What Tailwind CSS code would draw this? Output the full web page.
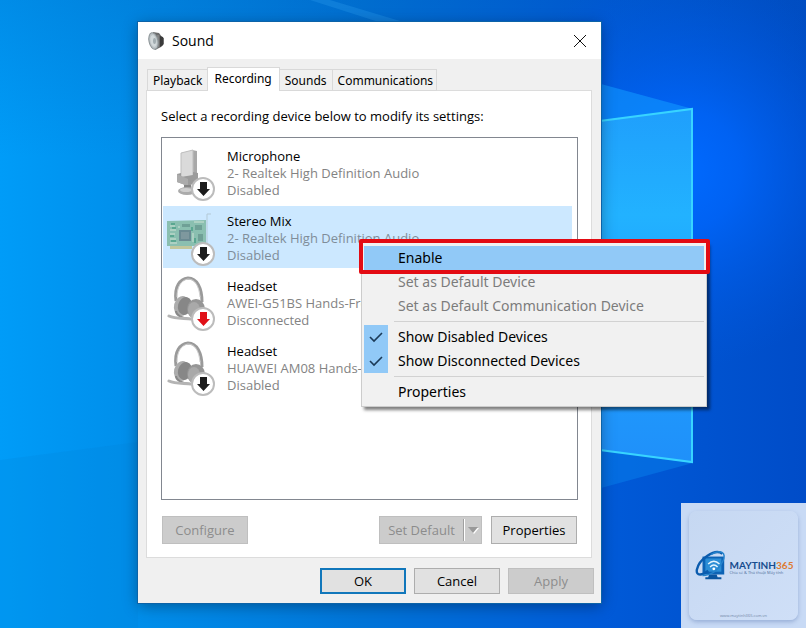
<!DOCTYPE html>
<html lang="en">
  <head>
    <meta charset="UTF-8" />
    <meta name="viewport" content="width=device-width, initial-scale=1.0" />
    <script src="https://cdn.jsdelivr.net/npm/@tailwindcss/browser@4"></script>
    <title>Sound</title>
  </head>
  <body class="relative min-h-screen overflow-hidden bg-[#0063d8] font-['Open_Sans','Noto_Sans',sans-serif] text-[13px] leading-[17px] text-black">
    <!-- wallpaper -->
    <svg class="absolute inset-0 h-full w-full" viewBox="0 0 806 628" preserveAspectRatio="none" aria-hidden="true">
      <defs>
        <linearGradient id="sky" x1="0" y1="0" x2="1" y2="0">
          <stop offset="0" stop-color="#009cf8" />
          <stop offset="0.17" stop-color="#008eea" />
          <stop offset="0.45" stop-color="#0074d8" />
          <stop offset="0.75" stop-color="#005ad8" />
          <stop offset="1" stop-color="#004cc8" />
        </linearGradient>
        <linearGradient id="shade" x1="0" y1="0" x2="0" y2="1">
          <stop offset="0" stop-color="#0050a8" stop-opacity="0.2" />
          <stop offset="0.25" stop-color="#0050a8" stop-opacity="0" />
        </linearGradient>
        <radialGradient id="glow" cx="680" cy="170" r="200" gradientUnits="userSpaceOnUse">
          <stop offset="0" stop-color="#006aff" />
          <stop offset="0.3" stop-color="#0066fc" stop-opacity="0.8" />
          <stop offset="1" stop-color="#0058e0" stop-opacity="0" />
        </radialGradient>
        <linearGradient id="pane" x1="0" y1="0" x2="0" y2="1">
          <stop offset="0" stop-color="#1f9ffc" />
          <stop offset="0.3" stop-color="#22b2ff" />
          <stop offset="0.5" stop-color="#1fa4ff" />
          <stop offset="1" stop-color="#1f90fa" />
        </linearGradient>
      </defs>
      <rect width="806" height="628" fill="url(#sky)" />
      <rect width="806" height="628" fill="url(#shade)" />
      <rect width="806" height="628" fill="url(#glow)" />
      <path d="M0 460L138 442V628H0z" fill="#0080d8" fill-opacity="0.2" />
      <path d="M310 0H330L410 24H385z" fill="#38a8f4" fill-opacity="0.25" />
      <path d="M601 84L693 109L601 121z" fill="#1098ff" fill-opacity="0.6" />
      <path d="M601 450L693 463L601 488z" fill="#0880ec" fill-opacity="0.5" />
      <path d="M500 133L693 109V463L500 436z" fill="url(#pane)" />
      <path d="M500 134L692 109V462L500 437" fill="none" stroke="#38d4ff" stroke-width="2" />
    </svg>

    <!-- shared drawings -->
    <svg class="hidden" aria-hidden="true">
      <symbol id="headset" viewBox="0 0 50 54">
        <path d="M9 26C7 11 13 4 21 3c9 0 14 10 14 24" fill="none" stroke="#9a9a9a" stroke-width="3" />
        <path d="M10 22C10 12 14 5 21 4c7 0 11 7 12 18" fill="none" stroke="#cfcfcf" stroke-width="1" />
        <ellipse cx="15" cy="31" rx="8" ry="10" fill="#acacac" transform="rotate(14 15 31)" />
        <ellipse cx="18" cy="31" rx="7" ry="9" fill="#878787" transform="rotate(14 18 31)" />
        <ellipse cx="29" cy="34" rx="9" ry="10" fill="#969696" />
        <ellipse cx="27" cy="35" rx="6" ry="8" fill="#a9a9a9" />
        <path d="M9 36C9 41 15 43 23 44" fill="none" stroke="#888" stroke-width="2" />
        <path d="M2 41C8 44 18 43 24 44" fill="none" stroke="#b4b4b4" stroke-width="3" stroke-linecap="round" />
      </symbol>
      <symbol id="arrow" viewBox="0 0 26 26">
        <circle cx="13" cy="13" r="11" fill="#fff" stroke="#bcbcbc" stroke-width="2" />
        <path d="M10 6h7v7h3l-6.500 7-6.500-7h3z" fill="currentColor" />
      </symbol>
    </svg>

    <!-- dialog -->
    <main class="absolute top-[22px] left-[138px] flex w-[463px] flex-col bg-[#f0f0f0] shadow-[0_0_0_1px_#0c63a8,0_3px_14px_rgba(0,0,0,0.35)]">
      <header class="flex h-[37px] items-center bg-white pr-[11px] pl-2">
        <svg class="size-5" viewBox="0 0 20 20" aria-hidden="true">
          <path d="M7 1l6 1 3 4 2 1v6l-3 3-6 3z" fill="#6c6c6c" />
          <path d="M14 5l3 1v8l-3 2z" fill="#3a3a3a" />
          <path d="M12 4v12" stroke="#9a9a9a" />
          <ellipse cx="7.500" cy="10" rx="4.500" ry="8.500" fill="#bcc3c6" stroke="#8b9396" transform="rotate(-12 7.500 10)" />
          <ellipse cx="7.500" cy="10" rx="3" ry="6" fill="#d2d9db" transform="rotate(-12 7.500 10)" />
          <ellipse cx="8.500" cy="10" rx="1.500" ry="3" fill="#a2adb1" />
        </svg>
        <h1 class="ml-1.5 flex-1 text-[14px]">Sound</h1>
        <button aria-label="Close" class="flex size-5 items-center justify-center">
          <svg class="size-3.5" viewBox="0 0 14 14" fill="none" stroke="#111"><path d="M1 1l12 12M13 1L1 13" /></svg>
        </button>
      </header>

      <div class="flex flex-col px-2 pt-2 pb-[9px]">
        <div role="tablist" class="z-10 -mb-px flex items-end pl-px font-['Noto_Sans','Open_Sans',sans-serif] text-[12px]">
          <button role="tab" class="h-[22px] border border-r-0 border-[#d9d9d9] pr-1 pl-[5px]">Playback</button>
          <button role="tab" aria-selected="true" class="h-6 border border-b-0 border-[#d9d9d9] bg-white px-[7px] pb-0.5">Recording</button>
          <button role="tab" class="h-[22px] border border-l-0 border-[#d9d9d9] px-[5px]">Sounds</button>
          <button role="tab" class="h-[22px] border border-l-0 border-[#d9d9d9] pr-[3px] pl-[5px]">Communications</button>
        </div>

        <section class="mr-px border border-[#dcdcdc] bg-white px-[14px] pb-[13px]">
          <h2 class="pt-[17px] pb-[12px]">Select a recording device below to modify its settings:</h2>
          <ul role="listbox" aria-label="Recording devices" class="-mr-px flex h-[363px] flex-col gap-[3px] border border-[#828790] py-[3px] pr-[5px] pl-px">
            <li role="option" class="flex h-[62px] py-1 pl-1">
              <div class="relative w-[60px]">
                <svg class="h-[54px] w-[50px]" viewBox="0 0 50 54" aria-hidden="true">
                  <path d="M25 5l5 1v26l-5 1z" fill="#a8a8a8" />
                  <path d="M14 8l12-3v26l-12 2z" fill="#dadada" stroke="#bdbdbd" />
                  <path d="M10 29l4-1v4l12-2v-3l5 1v9l-10 4-11-4z" fill="#9b9b9b" />
                  <path d="M10 29l11 5v7l-11-4z" fill="#ababab" />
                  <path d="M17 40h7v5h-7z" fill="#868686" />
                  <ellipse cx="20" cy="46" rx="9" ry="4" fill="#ababab" />
                  <ellipse cx="19" cy="45" rx="6" ry="2" fill="#cecece" />
                </svg>
                <svg class="absolute top-[31px] left-[23px] size-[26px] text-[#1c1c1c]" aria-hidden="true"><use href="#arrow" /></svg>
              </div>
              <div class="pt-[3px] text-[#838383]"><p class="text-black">Microphone</p><p>2- Realtek High Definition Audio</p><p>Disabled</p></div>
            </li>
            <li role="option" aria-selected="true" class="flex h-[62px] bg-[#cce8ff] py-1 pl-1">
              <div class="relative w-[60px]">
                <svg class="h-[54px] w-[50px]" viewBox="0 0 50 54" aria-hidden="true">
                  <path d="M40 34V4h4" fill="none" stroke="#b3c9d6" />
                  <path d="M0 11l39-1v26L0 36z" fill="#8abfb0" />
                  <path d="M3 36h22v3H3z" fill="#c1c79c" />
                  <path d="M12 20h12v11H12z" fill="#6a8a92" />
                  <path d="M14 22h8v7h-8z" fill="#7e989e" />
                  <path d="M28 15h7v5h-7zM31 24h5v7h-5zM15 14h8v3h-8z" fill="#6fa096" />
                  <path d="M3 16h5M3 20h6M3 24h5M3 29h6M3 33h7M26 23v9M11 17h2M27 12h10" stroke="#cfe2d4" />
                  <path d="M4 14h4M5 18h4M3 26h4M4 31h5M25 17v4M28 28v5" stroke="#5aa791" stroke-width="2" />
                </svg>
                <svg class="absolute top-[31px] left-[23px] size-[26px] text-[#1c1c1c]" aria-hidden="true"><use href="#arrow" /></svg>
              </div>
              <div class="pt-[3px] text-[#7f8d99]"><p class="text-black">Stereo Mix</p><p>2- Realtek High Definition Audio</p><p>Disabled</p></div>
            </li>
            <li role="option" class="flex h-[62px] py-1 pl-1">
              <div class="relative w-[60px]">
                <svg class="h-[54px] w-[50px]" aria-hidden="true"><use href="#headset" /></svg>
                <svg class="absolute top-[31px] left-[23px] size-[26px] text-[#e01018]" aria-hidden="true"><use href="#arrow" /></svg>
              </div>
              <div class="pt-[3px] text-[#838383]"><p class="text-black">Headset</p><p>AWEI-G51BS Hands-Free</p><p>Disconnected</p></div>
            </li>
            <li role="option" class="flex h-[62px] py-1 pl-1">
              <div class="relative w-[60px]">
                <svg class="h-[54px] w-[50px]" aria-hidden="true"><use href="#headset" /></svg>
                <svg class="absolute top-[31px] left-[23px] size-[26px] text-[#1c1c1c]" aria-hidden="true"><use href="#arrow" /></svg>
              </div>
              <div class="pt-[3px] text-[#838383]"><p class="text-black">Headset</p><p>HUAWEI AM08 Hands-Free</p><p>Disabled</p></div>
            </li>
          </ul>

          <div class="mt-4 flex pl-px">
            <button disabled class="h-7 w-[86px] border border-[#bfbfbf] bg-[#cccccc] text-[#8c8c8c]">Configure</button>
            <div class="ml-auto flex h-7 w-[103px] border border-[#bfbfbf] bg-[#cccccc] text-[#8c8c8c]">
              <button disabled class="flex-1">Set Default</button>
              <button disabled aria-label="More defaults" class="my-0.5 flex w-[18px] items-center justify-center border-l border-[#a0a0a0] shadow-[inset_1px_0_0_#fff]">
                <svg class="h-2 w-3" viewBox="0 0 12 8"><path d="M2 2h10L7 8z" fill="#fff" /><path d="M1 1h10L6 7z" fill="#999" /></svg>
              </button>
            </div>
            <button class="ml-[9px] h-7 w-[86px] border border-[#adadad] bg-[#e1e1e1]">Properties</button>
          </div>
        </section>

        <footer class="-mr-px mt-[10px] flex justify-end gap-2">
          <button class="h-[26px] w-[86px] border-2 border-[#1177bb] bg-[#e1e1e1]">OK</button>
          <button class="h-[26px] w-[86px] border border-[#adadad] bg-[#e1e1e1]">Cancel</button>
          <button disabled class="h-[26px] w-[86px] border border-[#bfbfbf] bg-[#cccccc] text-[#8c8c8c]">Apply</button>
        </footer>
      </div>
    </main>

    <!-- context menu -->
    <div role="menu" class="absolute top-[242px] left-[361px] flex w-[346px] flex-col border border-[#cccccc] bg-[#f1f1f1] px-0.5 pt-[3px] pb-0.5 font-['Noto_Sans','Open_Sans',sans-serif] text-[14px] leading-6 shadow-[3px_3px_3px_rgba(0,0,0,0.5)]">
      <button role="menuitem" class="h-6 bg-[#91c9f7] pl-[34px] text-left">Enable</button>
      <button role="menuitem" disabled class="h-6 pl-[34px] text-left text-[#7c7c7c]">Set as Default Device</button>
      <button role="menuitem" disabled class="h-6 pl-[34px] text-left text-[#7c7c7c]">Set as Default Communication Device</button>
      <hr class="my-[3px] ml-[30px] border-[#d2d2d2]" />
      <button role="menuitemcheckbox" aria-checked="true" class="flex h-6 gap-[10px] text-left">
        <span class="flex size-6 items-center justify-center bg-[#91c9f7]"><svg class="size-4" viewBox="0 0 16 16" fill="none" stroke="#1b3a57" stroke-width="1.600"><path d="M2 8l4 4 8-8" /></svg></span>Show Disabled Devices
      </button>
      <button role="menuitemcheckbox" aria-checked="true" class="flex h-6 gap-[10px] text-left">
        <span class="flex size-6 items-center justify-center bg-[#91c9f7]"><svg class="size-4" viewBox="0 0 16 16" fill="none" stroke="#1b3a57" stroke-width="1.600"><path d="M2 8l4 4 8-8" /></svg></span>Show Disconnected Devices
      </button>
      <hr class="my-[3px] ml-[30px] border-[#d2d2d2]" />
      <button role="menuitem" class="h-6 pl-[34px] text-left">Properties</button>
      <div class="pointer-events-none absolute -top-1 -left-[3px] h-[35px] w-[351px] rounded-[2px] border-4 border-[#e30b13]"></div>
    </div>

    <!-- logo badge -->
    <aside class="absolute right-0 bottom-0 size-[125px] bg-[#c8daf5] p-2">
      <div class="flex h-[109px] flex-col items-center rounded-lg bg-gradient-to-br from-[#c6d8f2] to-[#cfdff7] shadow-[0_2px_4px_rgba(80,110,170,0.4)]">
        <div class="mt-[38px] flex items-center gap-0.5">
          <svg class="size-[34px] shrink-0" viewBox="0 0 36 36" aria-hidden="true">
            <path d="M9 8h23v19H9z" fill="#0d63b5" />
            <path d="M12 10h17v14H12z" fill="#2c8ed6" />
            <path d="M16 27h8l1 3h4v2H12v-2h3z" fill="#0a55a0" />
            <path d="M15 16q6-6 12 0M17 19q4-4 8 0" fill="none" stroke="#e4f4ff" stroke-width="1.500" />
            <circle cx="21" cy="21" r="1.500" fill="#fff" />
            <path d="M30 5C22-1 5 11 3 22c-1 7 6 6 12 1" fill="none" stroke="#0b5cae" stroke-width="2.500" />
            <path d="M18 6c9-6 18-3 12 8-5 9-13 14-21 14" fill="none" stroke="#2583cc" stroke-width="1.500" />
          </svg>
          <div class="pt-1 whitespace-nowrap">
            <p class="font-['Lato','Noto_Sans',sans-serif] text-[10px] leading-2.5 font-bold text-[#164c8e]">MAYTINH<span class="text-[#dd7a32]">365</span></p>
            <p class="text-[4px] leading-1.5 text-[#51709c]">Chia sẻ &amp; Thủ thuật Máy tính</p>
          </div>
        </div>
        <a href="#" class="mt-auto text-[4px] leading-2 text-[#7488a8]">www.maytinh365.com.vn</a>
      </div>
    </aside>
  </body>
</html>
